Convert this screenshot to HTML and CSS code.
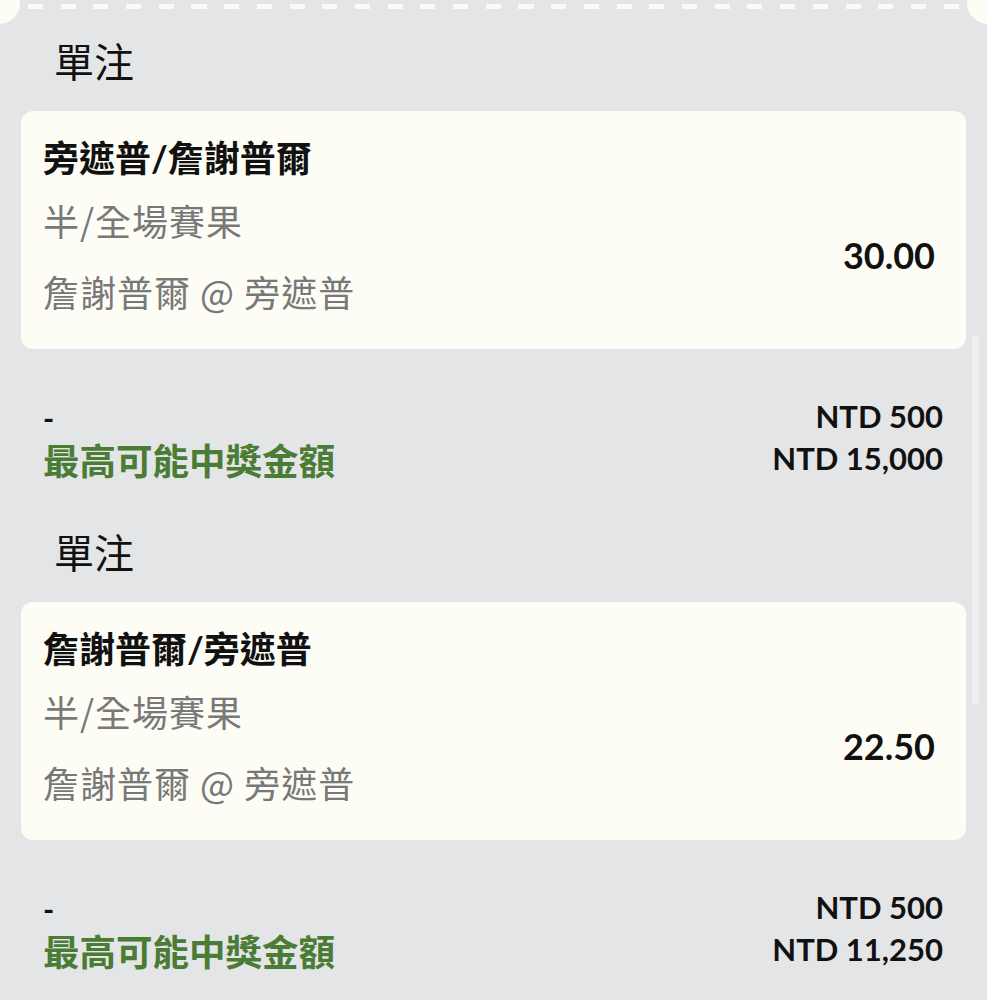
FILE: index.html
```html
<!DOCTYPE html>
<html lang="zh-Hant">
<head>
<meta charset="utf-8">
<title>單注</title>
<link rel="stylesheet" href="styles.css">
</head>
<body>
<div class="page">
  <div class="edge"><div class="dashes"></div></div>

  <section class="bet">
    <h2 class="bet-type">單注</h2>
    <div class="card">
      <div class="info">
        <div class="sel">旁遮普/詹謝普爾</div>
        <div class="market">半/全場賽果</div>
        <div class="match">詹謝普爾 @ 旁遮普</div>
      </div>
      <div class="odds">30.00</div>
    </div>
    <div class="stake">
      <div class="dash">-</div>
      <div class="amt">NTD 500</div>
      <div class="label">最高可能中獎金額</div>
      <div class="amt">NTD 15,000</div>
    </div>
  </section>

  <section class="bet">
    <h2 class="bet-type">單注</h2>
    <div class="card">
      <div class="info">
        <div class="sel">詹謝普爾/旁遮普</div>
        <div class="market">半/全場賽果</div>
        <div class="match">詹謝普爾 @ 旁遮普</div>
      </div>
      <div class="odds">22.50</div>
    </div>
    <div class="stake">
      <div class="dash">-</div>
      <div class="amt">NTD 500</div>
      <div class="label">最高可能中獎金額</div>
      <div class="amt">NTD 11,250</div>
    </div>
  </section>

  <div class="scrollbar"></div>
</div>
</body>
</html>
```

FILE: styles.css
```css
html, body {
  margin: 0;
  padding: 0;
}
body {
  background: #e4e5e7;
  font-family: "Lato", "Noto Sans CJK TC", sans-serif;
  color: #111;
}
.page {
  position: relative;
  width: 987px;
  height: 1000px;
  overflow: hidden;
}
.edge {
  position: relative;
  height: 28px;
  padding: 4px 28px 0;
}
.edge::before,
.edge::after {
  content: "";
  position: absolute;
  top: -18px;
  width: 42px;
  height: 42px;
  border-radius: 50%;
  background: #fdfdf5;
}
.edge::before { left: -22px; }
.edge::after { right: -22px; }
.dashes {
  height: 5px;
  background: repeating-linear-gradient(90deg, #fbfbf3 0 15px, transparent 15px 32.7px);
}
.bet + .bet {
  margin-top: 41px;
}
.bet-type {
  margin: 0 0 23px;
  padding-left: 54px;
  font-family: "Noto Sans CJK TC", sans-serif;
  font-size: 40px;
  line-height: 56px;
  font-weight: 400;
  color: #111;
}
.card {
  margin: 0 21px;
  background: #fdfdf5;
  border-radius: 12px;
  padding: 22px 31px 33px 22px;
  display: flex;
  justify-content: space-between;
  align-items: flex-start;
}
.info {
  display: flex;
  flex-direction: column;
}
.sel {
  font-size: 36px;
  line-height: 50px;
  font-weight: 700;
  color: #111;
}
.market,
.match {
  font-family: "Noto Sans CJK TC", sans-serif;
  font-size: 36px;
  line-height: 50px;
  font-weight: 400;
  letter-spacing: 1px;
  color: #787878;
}
.market { margin-top: 12px; }
.match { margin-top: 21px; }
.odds {
  padding-top: 97px;
  font-size: 36px;
  line-height: 50px;
  font-weight: 700;
  color: #111;
}
.stake {
  margin: 49px 44px 0 43px;
  display: grid;
  grid-template-columns: 1fr auto;
  grid-auto-rows: 42px;
  align-items: center;
}
.dash {
  font-size: 30px;
  font-weight: 700;
  line-height: 40px;
  padding-bottom: 2px;
}
.label {
  font-size: 36.5px;
  font-weight: 700;
  line-height: 42px;
  color: #4b7c35;
}
.amt {
  text-align: right;
  font-size: 31px;
  font-weight: 700;
  line-height: 36px;
  padding-bottom: 6px;
  color: #111;
}
.scrollbar {
  position: absolute;
  left: 972px;
  top: 335px;
  width: 7px;
  height: 370px;
  border-radius: 4px;
  background: #eff0f2;
}
```
